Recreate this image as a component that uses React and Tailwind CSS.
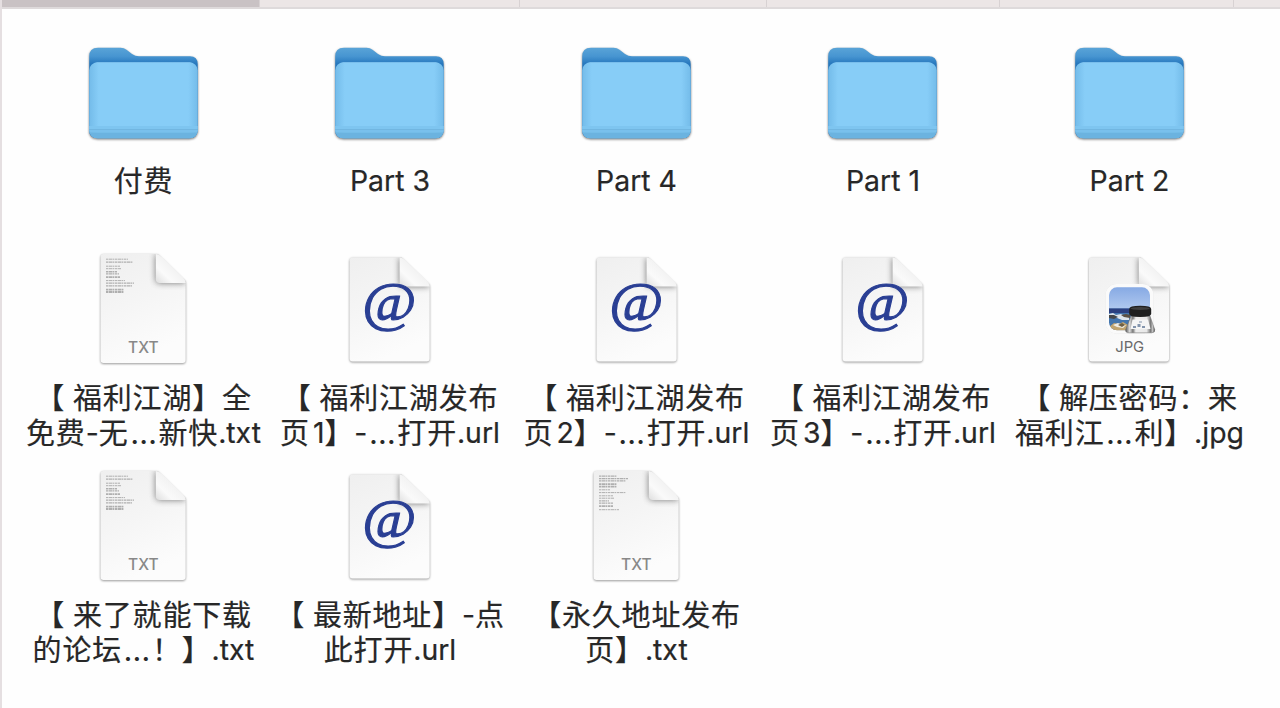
import { useId } from 'react'

const TABS = [
  { id: 1, className: 'w-[260px] bg-[#c9c2c4]' },
  { id: 2, className: 'w-[260px] bg-[#ece6e6]' },
  { id: 3, className: 'w-[247px] bg-[#ece6e6]' },
  { id: 4, className: 'w-[233px] bg-[#ece6e6]' },
  { id: 5, className: 'w-[234px] bg-[#ece6e6]' },
  { id: 6, className: 'w-[60px] bg-[#ece6e6]' },
]

const FILES = [
  { kind: 'folder', lines: ['付费'] },
  { kind: 'folder', lines: ['Part 3'] },
  { kind: 'folder', lines: ['Part 4'] },
  { kind: 'folder', lines: ['Part 1'] },
  { kind: 'folder', lines: ['Part 2'] },
  { kind: 'txt', lines: ['【 福利江湖】全', '免费-无…新快.txt'] },
  { kind: 'url', lines: ['【 福利江湖发布', '页1】-…打开.url'] },
  { kind: 'url', lines: ['【 福利江湖发布', '页2】-…打开.url'] },
  { kind: 'url', lines: ['【 福利江湖发布', '页3】-…打开.url'] },
  { kind: 'jpg', lines: ['【 解压密码：来', '福利江…利】.jpg'] },
  { kind: 'txt', lines: ['【 来了就能下载', '的论坛…！】.txt'] },
  { kind: 'url', lines: ['【 最新地址】-点', '此打开.url'] },
  { kind: 'txt', alt: true, lines: ['【永久地址发布', '页】.txt'] },
]

// y, width, weight of each tiny line on a text document
const TEXT_ROWS = [
  [4, 22, 1], [7, 27, 1.2], [11, 14, 1], [13.5, 15, 1], [16.5, 11, 1.4], [18.7, 13, 1.2],
  [22, 14, 1.8], [25.4, 19, 1], [28, 28, 1.3], [30.6, 26, 1.3], [34.4, 18, 1.8], [36.8, 18, 1.8],
]
const TEXT_ROWS_ALT = [
  [4, 18, 1.3], [6.4, 29, 1.2], [8.6, 27, 1.2], [12, 18, 1.8], [14.4, 18, 1.8], [17.6, 11, 1],
  [20.4, 27, 1], [23.6, 14, 1], [26, 15, 1], [28.7, 10, 1.4], [31, 14, 1.2], [34, 14, 1.8], [37.5, 20, 1],
]

function FolderIcon() {
  const id = useId()
  return (
    <svg width="128" height="128" viewBox="0 0 128 128">
      <defs>
        <linearGradient id={`${id}back`} x1="0" y1="17" x2="0" y2="34" gradientUnits="userSpaceOnUse">
          <stop offset="0" stopColor="#5ba5d8" />
          <stop offset=".55" stopColor="#4795d1" />
          <stop offset="1" stopColor="#2677bd" />
        </linearGradient>
        <linearGradient id={`${id}front`}>
          <stop offset="0" stopColor="#73bbe9" />
          <stop offset=".09" stopColor="#87cdf7" />
          <stop offset=".91" stopColor="#87cdf7" />
          <stop offset="1" stopColor="#73bbe9" />
        </linearGradient>
        <clipPath id={`${id}clip`}>
          <rect x="10.200" y="32.4" width="108.5" height="75.9" rx="8" />
        </clipPath>
      </defs>
      <g style={{ filter: 'drop-shadow(0 1px 1px rgba(0,0,0,.5))' }}>
        <path
          d="M10.200 26.500q0-8.700 8.700-8.700H41.500q3.500 0 6 2L53 23.900q3.200 2.400 7 2.400H111q7.700 0 7.700 8V99.500q0 8.700-8 8.700H18.200q-8 0-8-8Z"
          fill={`url(#${id}back)`}
        />
        <g clipPath={`url(#${id}clip)`}>
          <rect x="10" y="32" width="109" height="77" fill={`url(#${id}front)`} />
          <rect x="10" y="32" width="109" height="1" fill="#9ad8fb" />
          <rect x="10" y="96" width="109" height="3" fill="#7ec5f0" />
          <rect x="10" y="99" width="109" height="1" fill="#71b6e1" />
          <rect x="10" y="100" width="109" height="2.500" fill="#79c0ec" />
          <rect x="10" y="102.500" width="109" height="6" fill="#6bb3e0" />
        </g>
      </g>
    </svg>
  )
}

function Paper({ x, y, w, h, fx, fy, children }) {
  const id = useId()
  const r = x + w
  const b = y + h
  const page = `M${x + 3} ${y}H${fx + 2}L${r} ${fy - 2}V${b - 3}q0 3-3 3H${x + 3}q-3 0-3-3V${y + 3}q0-3 3-3Z`
  const flap = `M${fx} ${y}V${fy - 4}q0 4 4 4H${r}Q${r} ${fy - 3} ${r - 3} ${fy - 6}L${fx + 6} ${y + 3}Q${fx + 3} ${y} ${fx} ${y}Z`
  return (
    <svg width="128" height="128" viewBox="0 0 128 128">
      <defs>
        <linearGradient id={`${id}page`} x1="0" y1="0" x2=".35" y2="1">
          <stop offset="0" stopColor="#efefef" />
          <stop offset=".5" stopColor="#f5f5f5" />
          <stop offset="1" stopColor="#fcfcfc" />
        </linearGradient>
        <linearGradient id={`${id}flap`} x1="0" y1="1" x2=".65" y2=".35">
          <stop offset="0" stopColor="#dedede" />
          <stop offset=".45" stopColor="#fafafa" />
          <stop offset="1" stopColor="#f0f0f0" />
        </linearGradient>
        <clipPath id={`${id}clip`}>
          <path d={page} />
        </clipPath>
      </defs>
      <path
        d={page}
        fill={`url(#${id}page)`}
        style={{ filter: 'drop-shadow(0 1px 1px rgba(0,0,0,.36)) drop-shadow(0 0 1px rgba(0,0,0,.08))' }}
      />
      <g clipPath={`url(#${id}clip)`}>
        <path d={flap} fill="#555" opacity=".8" style={{ filter: 'blur(3px)' }} />
      </g>
      <path d={flap} fill={`url(#${id}flap)`} />
      {children}
    </svg>
  )
}

function TxtIcon({ alt }) {
  const rows = alt ? TEXT_ROWS_ALT : TEXT_ROWS
  return (
    <Paper x={21.6} y={7} w={85} h={109} fx={76.800} fy={35.900}>
      {rows.map(([y, width, weight]) => (
        <line
          key={y}
          x1="27"
          x2={27 + width}
          y1={y + 8.2}
          y2={y + 8.2}
          stroke="#999"
          strokeWidth={weight}
          strokeDasharray="2.300 .5 3.600 .4 1.500 .6"
          opacity=".75"
        />
      ))}
      <text x="64.300" y="106" textAnchor="middle" fontFamily="Inter" fontSize="15.500" fontWeight="500" fill="#888">
        TXT
      </text>
    </Paper>
  )
}

function UrlIcon() {
  return (
    <Paper x={24.6} y={10.400} w={80} h={104.200} fx={74.600} fy={39.500}>
      <text
        transform="translate(64.2 73) scale(1.08 1)"
        textAnchor="middle"
        fontFamily="Liberation Serif"
        fontStyle="italic"
        fontSize="54.500"
        fill="#2a3f94"
        stroke="#2a3f94"
        strokeWidth="1.100"
      >
        @
      </text>
    </Paper>
  )
}

function JpgIcon() {
  const id = useId()
  return (
    <Paper x={24} y={10.400} w={80} h={104.200} fx={73.800} fy={39.500}>
      <defs>
        <linearGradient id={`${id}sky`} x1="0" y1="0" x2="0" y2="1">
          <stop offset="0" stopColor="#86a9e4" />
          <stop offset="1" stopColor="#b0c9ef" />
        </linearGradient>
        <linearGradient id={`${id}glass`}>
          <stop offset="0" stopColor="#555" />
          <stop offset=".14" stopColor="#ddd" />
          <stop offset=".25" stopColor="#777" />
          <stop offset=".35" stopColor="#eee" />
          <stop offset=".72" stopColor="#e8e8e8" />
          <stop offset=".86" stopColor="#777" />
          <stop offset=".93" stopColor="#ccc" />
          <stop offset="1" stopColor="#444" />
        </linearGradient>
        <clipPath id={`${id}photo`}>
          <rect x="44" y="40.300" width="41" height="43" rx="8" />
        </clipPath>
      </defs>
      <rect
        x="40.500"
        y="37"
        width="48"
        height="49.500"
        rx="11"
        fill="#fafafa"
        style={{ filter: 'drop-shadow(0 0 .5px rgba(0,0,0,.1))' }}
      />
      <g clipPath={`url(#${id}photo)`}>
        <rect x="44" y="40" width="41" height="22" fill={`url(#${id}sky)`} />
        <rect x="44" y="61.500" width="41" height="22" fill="#4476ae" />
        <rect x="44" y="61.500" width="41" height="4.500" fill="#2c4180" />
        <path d="M44 67l4-1 3 2 5-1 4 2 4 0v4l-7 0-5-2-8 0Z" fill="#dde5ec" />
        <path d="M44 68l5 0 4 2-4 2-5-1Z" fill="#46484a" />
        <path d="M56 68l5-1 4 1v3l-6-1Z" fill="#5b5144" />
        <path d="M44 80l5-4 5 1 4-2 5 3v6H44Z" fill="#c2a570" />
        <path d="M48 78l5-2 5 2 3 0-3 3-6-1Z" fill="#f0ede4" />
        <path d="M53 78l4-2 3 2-3 2Z" fill="#6f6044" />
      </g>
      <path d="M66 69H85l4.700 13.500q.5 3.300-3 3.300H64q-4 0-3.300-3.300Z" fill={`url(#${id}glass)`} stroke="#666" strokeWidth=".5" />
      <path d="M67.500 72.500h15.500l2.500 9.500H65.500Z" fill="#f5f5f5" />
      <path d="M68 79h3v2h-3ZM72.500 77h3v3h-3ZM77 79h3v2h-3ZM74 74.500h3v1h-3Z" fill="#8495ad" />
      <path d="M64.200 62q0-3.200 11-3.200t11 3.200v5q0 3-11 3t-11-3Z" fill="#202020" />
      <ellipse cx="75.200" cy="61.500" rx="9.500" ry="1.500" fill="#404040" />
      <text x="64.700" y="105" textAnchor="middle" fontFamily="Inter" fontSize="14.800" fill="#6a6a6a">
        JPG
      </text>
    </Paper>
  )
}

const ICONS = { folder: FolderIcon, txt: TxtIcon, url: UrlIcon, jpg: JpgIcon }

// Latin, ellipsis and CJK runs each carry their own size and tracking.
function Line({ text }) {
  const runs = text.match(/…|[\x20-\x7e]+|[^\x20-\x7e…]+/g)
  return (
    <div className="flex h-[35px] justify-center whitespace-pre leading-[35px]">
      {runs.map((run, i) => {
        if (run === '…') {
          return <span key={i} className="w-[30px] text-center font-['Inter'] text-[31px]">{run}</span>
        }
        if (/^\d$/.test(run)) {
          return <span key={i} className="ml-[3px] font-['Inter'] text-[28.4px] [-webkit-text-stroke:0.2px]">{run}</span>
        }
        if (run.charCodeAt(0) < 128) {
          return <span key={i} className="font-['Inter'] text-[28.4px] [-webkit-text-stroke:0.2px]">{run}</span>
        }
        return (
          <span
            key={i}
            className="font-['Noto_Sans_CJK_SC',sans-serif] text-[29px] leading-[33px] tracking-[0.8px] [-webkit-text-stroke:0.2px]"
          >
            {run}
          </span>
        )
      })}
    </div>
  )
}

function FileItem({ file }) {
  const Icon = ICONS[file.kind]
  return (
    <div className="flex flex-col items-center">
      <Icon alt={file.alt} />
      <div className="mt-[5px] pl-[1.5px] text-[#272727]">
        {file.lines.map((line) => (
          <Line key={line} text={line} />
        ))}
      </div>
    </div>
  )
}

export default function App() {
  return (
    <div className="h-[708px] w-[1280px] overflow-hidden border-l-2 border-[#e5dfe1] bg-[#fefefe]">
      <div className="-ml-0.5 flex h-[9px] overflow-hidden border-b-2 border-[#dedadb]">
        {TABS.map((tab) => (
          <div key={tab.id} className={`${tab.className} shrink-0 border-r border-[#d8d2d3]`} />
        ))}
      </div>
      <div className="ml-[17.5px] mt-[21px] grid grid-cols-[repeat(5,246.5px)] auto-rows-[217px]">
        {FILES.map((file) => (
          <FileItem key={file.lines.join('')} file={file} />
        ))}
      </div>
    </div>
  )
}
